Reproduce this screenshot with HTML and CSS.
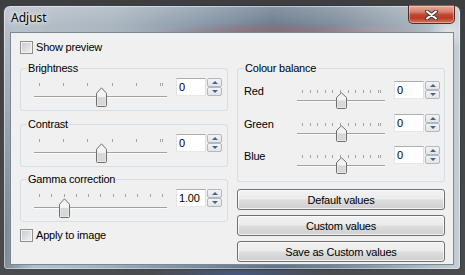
FILE: index.html
```html
<!DOCTYPE html>
<html>
<head>
<meta charset="utf-8">
<link rel="stylesheet" href="styles.css">
</head>
<body>
<div class="desktop">
  <div class="window">
    <div class="titlebar">
      <span class="title">Adjust</span>
      <div class="close">
        <svg width="13" height="10" viewBox="0 0 13 10"><path d="M2 1.5 L11 8.5 M11 1.5 L2 8.5" stroke="#3e3e3e" stroke-width="4" stroke-linecap="round"/><path d="M2 1.5 L11 8.5 M11 1.5 L2 8.5" stroke="#ffffff" stroke-width="2" stroke-linecap="round"/></svg>
      </div>
    </div>
    <div class="client">
      <div class="col">
        <label class="check"><span class="box"></span>Show preview</label>
        <fieldset class="group g-bright">
          <legend>Brightness</legend>
          <div class="row">
            <div class="slider">
              <div class="ticks"><i></i><i></i><i></i><i></i><i></i><i class="dbl"></i></div>
              <div class="track"></div>
              <svg class="thumb" style="left:62px" width="11" height="20" viewBox="0 0 11 20"><path d="M0.5 18.5 V6.3 L5.5 0.8 L10.5 6.3 V18.5 Q10.5 19.5 9.5 19.5 H1.5 Q0.5 19.5 0.5 18.5 Z" fill="#f3f3f3" stroke="#707070"/><rect x="1.5" y="10" width="8" height="8.5" fill="#d8d8d8"/></svg>
            </div>
            <div class="edit">0</div>
            <div class="spin"><span class="up"></span><span class="down"></span></div>
          </div>
        </fieldset>
        <fieldset class="group g-contrast">
          <legend>Contrast</legend>
          <div class="row">
            <div class="slider">
              <div class="ticks"><i></i><i></i><i></i><i></i><i></i><i class="dbl"></i></div>
              <div class="track"></div>
              <svg class="thumb" style="left:62px" width="11" height="20" viewBox="0 0 11 20"><path d="M0.5 18.5 V6.3 L5.5 0.8 L10.5 6.3 V18.5 Q10.5 19.5 9.5 19.5 H1.5 Q0.5 19.5 0.5 18.5 Z" fill="#f3f3f3" stroke="#707070"/><rect x="1.5" y="10" width="8" height="8.5" fill="#d8d8d8"/></svg>
            </div>
            <div class="edit">0</div>
            <div class="spin"><span class="up"></span><span class="down"></span></div>
          </div>
        </fieldset>
        <fieldset class="group g-gamma">
          <legend>Gamma correction</legend>
          <div class="row">
            <div class="slider">
              <div class="ticks"><i></i><i></i><i></i><i></i><i></i><i></i><i></i><i></i><i></i><i></i><i></i></div>
              <div class="track"></div>
              <svg class="thumb" style="left:25px" width="11" height="20" viewBox="0 0 11 20"><path d="M0.5 18.5 V6.3 L5.5 0.8 L10.5 6.3 V18.5 Q10.5 19.5 9.5 19.5 H1.5 Q0.5 19.5 0.5 18.5 Z" fill="#f3f3f3" stroke="#707070"/><rect x="1.5" y="10" width="8" height="8.5" fill="#d8d8d8"/></svg>
            </div>
            <div class="edit">1.00</div>
            <div class="spin"><span class="up"></span><span class="down"></span></div>
          </div>
        </fieldset>
        <label class="check apply"><span class="box"></span>Apply to image</label>
      </div>
      <div class="col">
        <fieldset class="group colour">
          <legend>Colour balance</legend>
          <div class="crow">
            <span class="clabel">Red</span>
            <div class="slider small">
              <div class="ticks"><i></i><i></i><i></i><i></i><i></i><i></i><i></i><i></i><i></i><i></i><i class="dbl"></i></div>
              <div class="track"></div>
              <svg class="thumb" style="left:39px" width="11" height="17" viewBox="0 0 11 17"><path d="M0.5 15.5 V5.5 L5.5 0.8 L10.5 5.5 V15.5 Q10.5 16.5 9.5 16.5 H1.5 Q0.5 16.5 0.5 15.5 Z" fill="#f3f3f3" stroke="#707070"/><rect x="1.5" y="8.5" width="8" height="7" fill="#d8d8d8"/></svg>
            </div>
            <div class="edit">0</div>
            <div class="spin"><span class="up"></span><span class="down"></span></div>
          </div>
          <div class="crow">
            <span class="clabel">Green</span>
            <div class="slider small">
              <div class="ticks"><i></i><i></i><i></i><i></i><i></i><i></i><i></i><i></i><i></i><i></i><i class="dbl"></i></div>
              <div class="track"></div>
              <svg class="thumb" style="left:39px" width="11" height="17" viewBox="0 0 11 17"><path d="M0.5 15.5 V5.5 L5.5 0.8 L10.5 5.5 V15.5 Q10.5 16.5 9.5 16.5 H1.5 Q0.5 16.5 0.5 15.5 Z" fill="#f3f3f3" stroke="#707070"/><rect x="1.5" y="8.5" width="8" height="7" fill="#d8d8d8"/></svg>
            </div>
            <div class="edit">0</div>
            <div class="spin"><span class="up"></span><span class="down"></span></div>
          </div>
          <div class="crow">
            <span class="clabel">Blue</span>
            <div class="slider small">
              <div class="ticks"><i></i><i></i><i></i><i></i><i></i><i></i><i></i><i></i><i></i><i></i><i class="dbl"></i></div>
              <div class="track"></div>
              <svg class="thumb" style="left:39px" width="11" height="17" viewBox="0 0 11 17"><path d="M0.5 15.5 V5.5 L5.5 0.8 L10.5 5.5 V15.5 Q10.5 16.5 9.5 16.5 H1.5 Q0.5 16.5 0.5 15.5 Z" fill="#f3f3f3" stroke="#707070"/><rect x="1.5" y="8.5" width="8" height="7" fill="#d8d8d8"/></svg>
            </div>
            <div class="edit">0</div>
            <div class="spin"><span class="up"></span><span class="down"></span></div>
          </div>
        </fieldset>
        <div class="buttons">
          <button class="btn">Default values</button>
          <button class="btn">Custom values</button>
          <button class="btn">Save as Custom values</button>
        </div>
      </div>
    </div>
  </div>
</div>
</body>
</html>
```
FILE: styles.css
```css
* { box-sizing: border-box; }
html, body { margin: 0; padding: 0; }
body {
  width: 465px;
  height: 275px;
  overflow: hidden;
  font-family: "Liberation Sans", Arial, sans-serif;
  font-size: 11px;
  letter-spacing: -0.2px;
  color: #000;
  background:
    radial-gradient(ellipse 90px 10px at 240px 274px, rgba(70,90,130,0.9), transparent),
    linear-gradient(to bottom, #3e3e40, #4a4b4e);
}
.desktop { padding: 5px 0 0 3px; }
.window {
  width: 458px;
  height: 265px;
  border: 1px solid rgba(25,30,40,0.75);
  border-radius: 7px 7px 4px 4px;
  padding: 0 6px 4px 6px;
  display: flex;
  flex-direction: column;
  box-shadow: inset 0 0 0 1px rgba(255,255,255,0.45);
  background:
    radial-gradient(ellipse 120px 14px at 265px 30px, rgba(165,95,100,0.8), transparent),
    radial-gradient(ellipse 60px 12px at 365px 30px, rgba(200,150,155,0.6), transparent),
    radial-gradient(ellipse 20px 16px at 445px 26px, rgba(240,240,240,0.7), transparent),
    radial-gradient(ellipse 30px 220px at 0px 230px, rgba(50,60,72,0.45), transparent),
    radial-gradient(ellipse 200px 14px at 230px 268px, rgba(60,75,110,0.45), transparent),
    linear-gradient(to bottom, rgba(255,255,255,0.18), rgba(255,255,255,0) 20px),
    linear-gradient(to right, #b9c2ca 0px, #aab5bf 110px, #8999a8 200px, #6b7e90 270px, #7f8e9c 330px, #a2adb7 400px, #c8cfd5 458px);
}
.titlebar {
  height: 26px;
  display: flex;
  align-items: flex-start;
  flex: none;
}
.title {
  font-family: "Noto Sans", "Liberation Sans", sans-serif;
  font-size: 12px;
  letter-spacing: 0;
  line-height: 16px;
  margin: 4px 0 0 1px;
  text-shadow: 0 0 6px rgba(255,255,255,0.9), 0 0 3px rgba(255,255,255,0.8);
}
.close {
  margin: -1px -1px 0 auto;
  width: 47px;
  height: 19px;
  border: 1px solid #5a2a22;
  border-top-color: rgba(90,42,34,0.4);
  border-radius: 0 0 5px 5px;
  background: linear-gradient(to bottom, #e4aa9e 0%, #d6806c 35%, #c24a33 50%, #b93a24 70%, #d07a62 100%);
  box-shadow: inset 0 0 0 1px rgba(255,220,210,0.45);
  display: flex;
  align-items: center;
  justify-content: center;
}
.close svg { display: block; }
.client {
  flex: none;
  height: 233px;
  background: #f0f0f0;
  border: 1px solid #7a8894;
  display: grid;
  grid-template-columns: 208px 208px;
  column-gap: 9px;
  padding: 0 8px 0 9px;
}
.col { display: flex; flex-direction: column; }
.check {
  display: flex;
  align-items: center;
  gap: 3px;
  height: 13px;
  line-height: 13px;
  margin-top: 8px;
}
.check.apply { margin-top: 7px; }
.box {
  width: 13px;
  height: 13px;
  flex: none;
  border: 1px solid #8e8f8f;
  background: linear-gradient(135deg, #c4c9cf, #f2f2f2);
  box-shadow: inset 0 0 0 1px #f4f4f4;
}
fieldset.group {
  margin: 0;
  min-width: 0;
  border: 1px solid #d5dfe5;
  border-radius: 3px;
  padding: 4px 5px 3px 6px;
}
fieldset.group legend {
  padding: 0 1px;
  line-height: 12px;
  height: 12px;
}
.g-bright { margin-top: 8px !important; }
.g-contrast { margin-top: 7px !important; }
.g-gamma { margin-top: 6px !important; }
.row {
  display: flex;
  align-items: flex-start;
  padding-left: 7px;
}
.slider {
  position: relative;
  width: 133px;
  height: 25px;
  margin-top: 4px;
  flex: none;
}
.ticks {
  position: absolute;
  left: 5px;
  right: 4px;
  top: 1px;
  height: 3px;
  display: flex;
  justify-content: space-between;
}
.ticks i {
  width: 1px;
  height: 3px;
  background: #a3a3a3;
}
.ticks i.dbl {
  width: 3px;
  background: none;
  border-left: 1px solid #a3a3a3;
  border-right: 1px solid #a3a3a3;
}
.track {
  position: absolute;
  left: 0;
  right: 0;
  top: 14px;
  height: 2px;
  border-top: 1px solid #a0a0a0;
  background: #fbfbfb;
}
.thumb {
  position: absolute;
  top: 5px;
  display: block;
}
.edit {
  width: 30px;
  height: 18px;
  margin-left: 9px;
  flex: none;
  background: #fff;
  border: 1px solid;
  border-color: #abadb3 #dbdfe6 #e3e9ef #e2e3ea;
  padding-left: 2px;
  line-height: 16px;
}
.spin {
  width: 15px;
  height: 18px;
  margin-left: 1px;
  flex: none;
  display: flex;
  flex-direction: column;
}
.spin span {
  height: 9px;
  border: 1px solid #b3b8c0;
  border-radius: 2px;
  background: linear-gradient(to bottom, #f4f4f4, #e2e4e8);
  display: flex;
  align-items: center;
  justify-content: center;
}
.spin span::after {
  content: "";
  border-left: 3px solid transparent;
  border-right: 3px solid transparent;
}
.spin .up::after { border-bottom: 3px solid #4d6188; }
.spin .down::after { border-top: 3px solid #4d6188; }
.colour {
  margin-top: 29px !important;
  padding: 7px 4px 5px 6px !important;
  display: grid;
  grid-template-rows: 33px 32px 30px;
}
.crow {
  display: flex;
  align-items: flex-start;
}
.clabel {
  width: 53px;
  flex: none;
  line-height: 18px;
  padding-top: 1px;
}
.slider.small {
  width: 88px;
  height: 19px;
  margin-top: 9px;
}
.slider.small .ticks { top: 0; }
.slider.small .track { top: 10px; }
.slider.small .thumb { top: 2px; }
.buttons {
  margin-top: 7px;
  display: flex;
  flex-direction: column;
  gap: 5px;
}
.btn {
  height: 21px;
  width: 100%;
  margin: 0;
  padding: 0;
  font: inherit;
  letter-spacing: -0.2px;
  color: #000;
  border: 1px solid #707070;
  border-radius: 3px;
  background: linear-gradient(to bottom, #f2f2f2 0%, #ebebeb 48%, #dddddd 52%, #cfcfcf 100%);
  box-shadow: inset 0 0 0 1px rgba(255,255,255,0.75);
}
```
